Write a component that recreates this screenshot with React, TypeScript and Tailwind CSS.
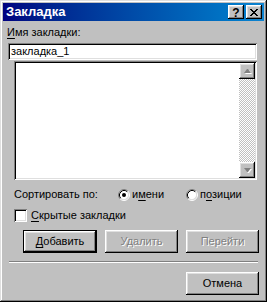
import React from "react";

const raised =
  "shadow-[inset_-1px_-1px_#000,inset_1px_1px_#fff,inset_-2px_-2px_#808080,inset_2px_2px_#dfdfdf]";
const sunken =
  "shadow-[inset_1px_1px_#808080,inset_-1px_-1px_#fff,inset_2px_2px_#000,inset_-2px_-2px_#dfdfdf]";

function Radio({ checked }: { checked?: boolean }) {
  return (
    <svg width="12" height="12" viewBox="0 0 12 12" className="shrink-0">
      <circle cx="6" cy="6" r="4.5" fill="#fff" />
      <path d="M2.11 9.89 A5.5 5.5 0 0 1 9.89 2.11" stroke="#808080" strokeWidth="1" fill="none" />
      <path d="M9.89 2.11 A5.5 5.5 0 0 1 2.11 9.89" stroke="#fff" strokeWidth="1" fill="none" />
      <path d="M2.82 9.18 A4.5 4.5 0 0 1 9.18 2.82" stroke="#000" strokeWidth="1" fill="none" />
      <path d="M9.18 2.82 A4.5 4.5 0 0 1 2.82 9.18" stroke="#dfdfdf" strokeWidth="1" fill="none" />
      {checked && <circle cx="6" cy="6" r="2" fill="#000" />}
    </svg>
  );
}

function ScrollBtn({ up }: { up?: boolean }) {
  return (
    <div className={`w-[16px] h-[16px] bg-[#c0c0c0] ${raised} flex items-center justify-center`}>
      <svg width="9" height="6" viewBox="0 0 9 6">
        {up ? (
          <>
            <path d="M1 5 L4 1 L5 1 L8 5 Z" fill="#fff" transform="translate(1,1)" />
            <path d="M1 5 L4 1 L5 1 L8 5 Z" fill="#808080" />
          </>
        ) : (
          <>
            <path d="M1 1 L8 1 L5 5 L4 5 Z" fill="#fff" transform="translate(1,1)" />
            <path d="M1 1 L8 1 L5 5 L4 5 Z" fill="#808080" />
          </>
        )}
      </svg>
    </div>
  );
}

const disabledText = "text-[#808080] [text-shadow:1px_1px_0_#fff]";

export default function App() {
  return (
    <div
      className={`w-[267px] h-[302px] bg-[#c0c0c0] p-[3px] flex flex-col font-['Liberation_Sans',Arial,sans-serif] text-[11px] leading-[13px] text-black select-none shadow-[inset_-1px_-1px_#000,inset_1px_1px_#dfdfdf,inset_-2px_-2px_#808080,inset_2px_2px_#fff]`}
    >
      {/* Title bar */}
      <div className="h-[18px] flex items-center bg-gradient-to-r from-[#000080] to-[#1084d0] pl-[3px] pr-[2px] shrink-0">
        <span className="flex-1 text-white font-bold text-[13px] leading-[16px]">Закладка</span>
        <div className={`w-[16px] h-[14px] bg-[#c0c0c0] ${raised} flex items-center justify-center font-bold text-[12px] leading-[12px] pt-[1px]`}>
          ?
        </div>
        <div className={`ml-[2px] w-[16px] h-[14px] bg-[#c0c0c0] ${raised} flex items-center justify-center`}>
          <svg width="8" height="7" viewBox="0 0 8 7" shapeRendering="crispEdges">
            <path d="M0 0h2v1h-2zM6 0h2v1h-2zM1 1h2v1h-2zM5 1h2v1h-2zM2 2h4v1h-4zM3 3h2v1h-2zM2 4h4v1h-4zM1 5h2v1h-2zM5 5h2v1h-2zM0 6h2v1h-2zM6 6h2v1h-2z" fill="#000" />
          </svg>
        </div>
      </div>

      {/* Label */}
      <div className="mt-[5px] ml-[4px] h-[13px]">
        <span className="underline underline-offset-[2px]">И</span>мя закладки:
      </div>

      {/* Input */}
      <div className={`mt-[4px] ml-[5px] w-[249px] h-[17px] bg-white ${sunken} flex items-center pl-[3px] shrink-0`}>
        закладка_1
      </div>

      {/* List */}
      <div className={`mt-[1px] ml-[11px] w-[243px] h-[119px] bg-white ${sunken} p-[2px] flex justify-end shrink-0`}>
        <div className="w-[16px] h-full flex flex-col">
          <ScrollBtn up />
          <div className="flex-1 bg-[repeating-conic-gradient(#c0c0c0_0_25%,#ffffff_0_50%)] bg-[length:2px_2px]" />
          <ScrollBtn />
        </div>
      </div>

      {/* Sort row */}
      <div className="mt-[8px] ml-[11px] h-[13px] flex items-center">
        <span className="w-[104px]">Сортировать по:</span>
        <div className="w-[68px] flex items-center gap-[2px]">
          <Radio checked />
          <span>
            и<span className="underline underline-offset-[2px]">м</span>ени
          </span>
        </div>
        <div className="flex items-center gap-[2px]">
          <Radio />
          <span>
            п<span className="underline underline-offset-[2px]">о</span>зиции
          </span>
        </div>
      </div>

      {/* Checkbox row */}
      <div className="mt-[8px] ml-[11px] h-[13px] flex items-center">
        <div className={`w-[13px] h-[13px] bg-white ${sunken}`} />
        <span className="ml-[4px]">
          <span className="underline underline-offset-[2px]">С</span>крытые закладки
        </span>
      </div>

      {/* Buttons row */}
      <div className="mt-[8px] ml-[20px] h-[23px] flex gap-[8px] shrink-0">
        <div className="w-[74px] h-[23px] border border-black">
          <div className={`w-full h-full ${raised} flex items-center justify-center`}>
            <span>
              <span className="underline underline-offset-[2px]">Д</span>обавить
            </span>
          </div>
        </div>
        <div className={`w-[73px] h-[23px] ${raised} flex items-center justify-center ${disabledText}`}>
          Удалить
        </div>
        <div className={`w-[73px] h-[23px] ${raised} flex items-center justify-center ${disabledText}`}>
          Перейти
        </div>
      </div>

      {/* Separator */}
      <div className="mt-[8px] ml-[6px] w-[249px] h-[2px] border-t border-t-[#808080] border-b border-b-white shrink-0" />

      {/* Cancel */}
      <div className={`mt-[9px] ml-[183px] w-[73px] h-[23px] ${raised} flex items-center justify-center shrink-0`}>
        Отмена
      </div>
    </div>
  );
}
